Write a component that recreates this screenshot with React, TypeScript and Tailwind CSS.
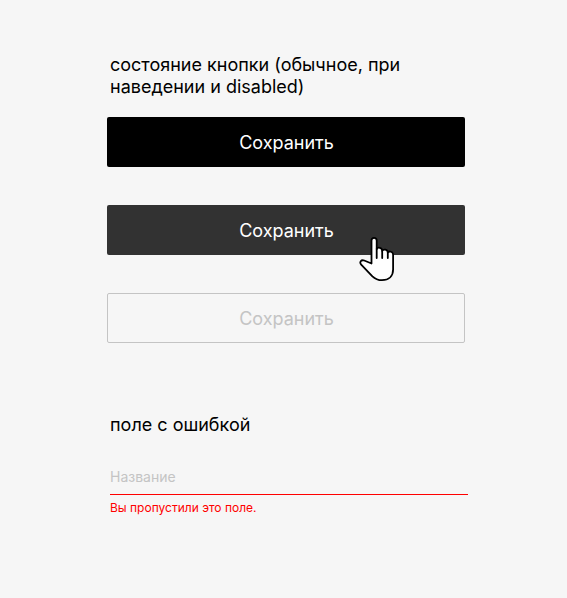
const button =
  'flex h-[50px] w-[358px] items-center justify-center rounded-[2px] pl-px pt-[2px] text-[18px] leading-[22px]';

function Hand() {
  return (
    <svg className="absolute left-[251px] top-[31px] h-[46px] w-[38px]" viewBox="0 0 38 46" fill="none">
      <path
        d="M13.500 27.500V4.500a2.600 2.600 0 0 1 5.200 0V13c1-2.100 5.500-1.600 5.500 1.800 1.100-2 5.600-1.500 5.600 1.700 1.300-1.800 5.300-1 5.300 2.300V33.500c0 6.800-4.400 10.700-11.100 10.700-4 0-6.900-1.300-9.600-3.900L3.200 28.700c-2.100-2.700-.1-5.200 3-4.200z"
        fill="white"
        stroke="black"
        strokeWidth="1.800"
        strokeLinejoin="round"
      />
      <path d="M18.700 13v9M24.200 14.800v7.200M29.800 16.500v5.500" stroke="black" strokeWidth="1.800" strokeLinecap="round" />
    </svg>
  );
}

export default function App() {
  return (
    <main className="h-[598px] w-[567px] bg-[#f6f6f6] pl-[107px] pt-[54px] font-['Inter',sans-serif] text-black">
      <h2 className="ml-[3px] w-[320px] text-[18px] font-normal leading-[22px]">
        состояние кнопки (обычное, при наведении и disabled)
      </h2>
      <div className="mt-[19px] flex flex-col gap-[38px]">
        <button className={`${button} bg-black text-white`}>Сохранить</button>
        <div className="relative">
          <button className={`${button} bg-[#323232] text-white`}>Сохранить</button>
          <Hand />
        </div>
        <button disabled className={`${button} border border-[#c4c4c4] text-[#c4c4c4]`}>Сохранить</button>
      </div>
      <section className="ml-[3px] mt-[71px] w-[358px]">
        <h2 className="text-[18px] font-normal leading-[22px]">поле с ошибкой</h2>
        <div className="mt-[32px] h-[27px] border-b border-[#ff0000] text-[14px] leading-[17px] text-[#c4c4c4]">Название</div>
        <p className="mt-[5px] text-[12px] leading-[15px] text-[#ff0000]">Вы пропустили это поле.</p>
      </section>
    </main>
  );
}
